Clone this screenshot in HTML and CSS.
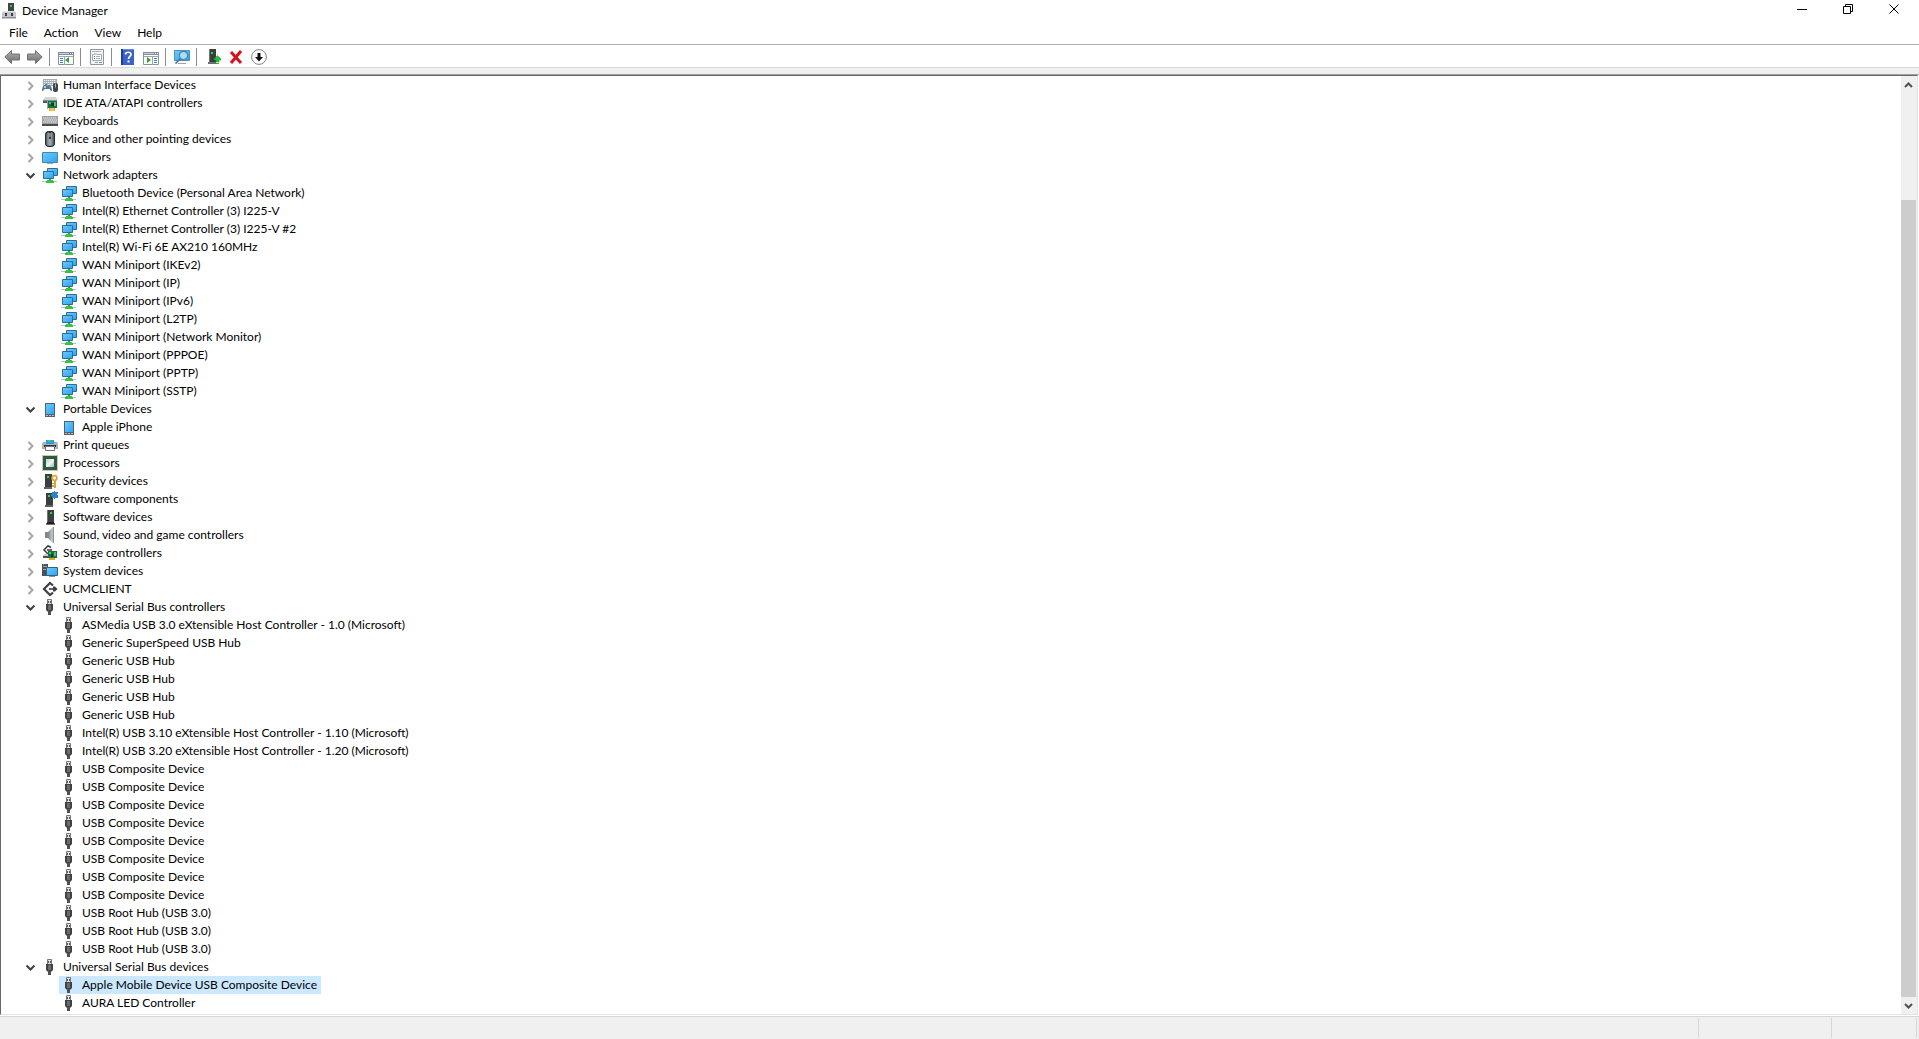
FILE: index.html
```html
<!DOCTYPE html>
<html lang="en">
<head>
  <meta charset="utf-8">
  <title>Device Manager</title>
  <link rel="stylesheet" href="styles.css">
</head>
<body>
  <svg class="sprite" aria-hidden="true">
    <defs>
      <linearGradient id="screen" x1="0" y1="0" x2="1" y2="1">
        <stop offset="0" stop-color="#6fcbff"/>
        <stop offset="1" stop-color="#2ba2f3"/>
      </linearGradient>
      <linearGradient id="metal" x1="0" y1="0" x2="0" y2="1">
        <stop offset="0" stop-color="#b4b4b4"/>
        <stop offset="1" stop-color="#6a6a6a"/>
      </linearGradient>
      <linearGradient id="mouse-body" x1="0" y1="0" x2="1" y2="0">
        <stop offset="0" stop-color="#5b636b"/>
        <stop offset="0.5" stop-color="#a9b1b8"/>
        <stop offset="1" stop-color="#4d545b"/>
      </linearGradient>
      <linearGradient id="chip" x1="0" y1="0" x2="1" y2="1">
        <stop offset="0" stop-color="#c9c9c9"/>
        <stop offset="0.5" stop-color="#f2f2f2"/>
        <stop offset="1" stop-color="#b5b5b5"/>
      </linearGradient>
      <linearGradient id="cone" x1="0" y1="0" x2="1" y2="0">
        <stop offset="0" stop-color="#7b8289"/>
        <stop offset="0.7" stop-color="#c5cacf"/>
        <stop offset="1" stop-color="#7b8289"/>
      </linearGradient>
    </defs>

    <symbol id="closed" viewBox="0 0 16 18">
      <path d="M5.500 6l4 4-4 4" fill="none" stroke="#a6a6a6" stroke-width="2"/>
    </symbol>
    <symbol id="open" viewBox="0 0 16 18">
      <path d="M3.500 7.500l4 4 4-4" fill="none" stroke="#404040" stroke-width="2"/>
    </symbol>

    <symbol id="app" viewBox="0 0 16 16">
      <path d="M6 0h6v10H6z" fill="#404347"/>
      <path d="M8 2h2v2H8z" fill="#23d52b"/>
      <path d="M1 8h12l1 2v5H0v-5z" fill="#c3c6cb"/>
      <path d="M0 14h14v1.500H0z" fill="#8b8f94"/>
      <path d="M1 8h12v1H1z" fill="#e5e7ea"/>
      <path d="M3 10h2v3H3zM9 10h2v3H9z" fill="#3b3e42"/>
    </symbol>

    <symbol id="hid" viewBox="0 0 16 16">
      <path d="M1 2h14v7H1z" fill="#a8acb0"/>
      <path d="M2 3.500h12M2 5.500h12M2 7.500h12" stroke="#f4f4f4" stroke-dasharray="1.300 .7"/>
      <path d="M0 14c0-3 1-6 3-6 1 0 1 1 2 1s1-1 2-1c2 0 3 3 3 6-2 0-2-2-3-2H3c-1 0-1 2-3 2z" fill="#66717c"/>
      <circle cx="3" cy="10" r="1" fill="#dfe6ec"/>
      <path d="M3 7h2v2H3zM7 9h2v2H7z" fill="#2196f3"/>
      <rect x="11" y="6" width="5" height="9" rx="2" fill="#3f464c"/>
      <path d="M13 6.500h1v4h-1z" fill="#aeb5bb"/>
    </symbol>

    <symbol id="ide" viewBox="0 0 16 16">
      <path d="M3 2h11l2 3H1z" fill="#d3d5d8"/>
      <path d="M1 5h14v3H1z" fill="#54585c"/>
      <path d="M1 5h14v1H1z" fill="#888d91"/>
      <path d="M5 6h1v8H5z" fill="#9a9ea2"/>
      <path d="M6 6h9v7H6z" fill="#187143"/>
      <path d="M7 7h2v2H7zM12 7h2v4h-2z" fill="#4fb977"/>
      <path d="M9 8h3v3H9z" fill="#0b4328"/>
      <path d="M7 13h6v3H7z" fill="#eda11f"/>
      <path d="M9 13v3M11 13v3" stroke="#fff" stroke-width=".6"/>
    </symbol>

    <symbol id="keyboard" viewBox="0 0 16 16">
      <path d="M0 3h16v10H0z" fill="#9da0a3"/>
      <path d="M0 11h16v2H0z" fill="#4a4d50"/>
      <path d="M1 5h14" stroke="#eee" stroke-dasharray="1.400 .6"/>
      <path d="M2 7h13" stroke="#eee" stroke-dasharray="1.400 .6"/>
      <path d="M1 9h14" stroke="#eee" stroke-dasharray="1.400 .6"/>
    </symbol>

    <symbol id="mouse" viewBox="0 0 16 16">
      <rect x="3.600" y=".6" width="8.800" height="14.800" rx="3.500" fill="url(#mouse-body)" stroke="#26292c" stroke-width="1.200"/>
      <path d="M7 1h2v7H7z" fill="#34383c"/>
      <path d="M7.500 2h1v4h-1z" fill="#c8ced3"/>
    </symbol>

    <symbol id="monitor" viewBox="0 0 16 16">
      <path d="M.5 3.500h15v10H.5z" fill="url(#screen)" stroke="#4b86a8"/>
      <path d="M5 14h6v1H5z" fill="#9aa5ad"/>
    </symbol>

    <symbol id="network" viewBox="0 0 16 16">
      <path d="M5.500 1.500h10v7h-10z" fill="url(#screen)" stroke="#2e6d92"/>
      <path d="M1.500 4.500h10v7h-10z" fill="url(#screen)" stroke="#2e6d92"/>
      <path d="M7 12h2v2H7z" fill="#39a34a"/>
      <path d="M0 14h15v1H0z" fill="#b9c4bd"/>
      <path d="M5 13h6v1h1v2H4v-2h1z" fill="#35c441"/>
    </symbol>

    <symbol id="phone" viewBox="0 0 16 16">
      <path d="M3 2h10v14H3z" fill="#55606a"/>
      <path d="M4 3h8v10H4z" fill="url(#screen)"/>
      <path d="M4 14h2v1H4zM7 14h2v1H7zM10 14h2v1h-2z" fill="#b8c0c6"/>
    </symbol>

    <symbol id="printer" viewBox="0 0 16 16">
      <path d="M4 3h8v4H4z" fill="#2f9ae8"/>
      <path d="M6 3h3v2H6z" fill="#48c75a"/>
      <path d="M1 5h3v2h8V5h3l1 2v5H0V7z" fill="#aeb1b4"/>
      <path d="M2 8h12v2H2z" fill="#35383b"/>
      <path d="M3.500 9.500h9v4h-9z" fill="#fff" stroke="#6d7174"/>
    </symbol>

    <symbol id="cpu" viewBox="0 0 16 16">
      <path d="M.5.5h15v15H.5z" fill="none" stroke="#b48c38" stroke-dasharray="1 1"/>
      <path d="M1 1h14v14H1z" fill="#275c46"/>
      <path d="M4 4h8v8H4z" fill="url(#chip)"/>
    </symbol>

    <symbol id="tower" viewBox="0 0 16 16">
      <path d="M5 1h7v12H5z" fill="#3c3f41"/>
      <path d="M5 1h1v12H5z" fill="#717577"/>
      <path d="M8 3h2v2H8z" fill="#21e32c"/>
      <path d="M4 14h9v2H4z" fill="#6e7275"/>
      <path d="M5 13h7v2H5z" fill="#202224"/>
    </symbol>

    <symbol id="security" viewBox="0 0 16 16">
      <path d="M3 1h7v13H3z" fill="#3c3f41"/>
      <path d="M5 3h2v2H5z" fill="#21e32c"/>
      <path d="M2 14h8v2H2z" fill="#5e6265"/>
      <circle cx="12.500" cy="5" r="2.300" fill="none" stroke="#dba43f" stroke-width="1.800"/>
      <path d="M12 7h2v8h-2zM10 10h2v1h-2zM10 12h2v2h-2z" fill="#dba43f"/>
    </symbol>

    <symbol id="component" viewBox="0 0 16 16">
      <path d="M4 2h7v12H4z" fill="#3c3f41"/>
      <path d="M6 4h2v2H6z" fill="#21e32c"/>
      <path d="M3 14h8v2H3z" fill="#5e6265"/>
      <path d="M10 1h2V0h1v1h3v2h-1v1h1v3h-3v1h-1V7h-2V5H9V3h1z" fill="#2b83cb"/>
    </symbol>

    <symbol id="speaker" viewBox="0 0 16 16">
      <path d="M3 5h3v6H3z" fill="#80878e"/>
      <path d="M6 5l5-5h1v16h-1l-5-5z" fill="url(#cone)"/>
    </symbol>

    <symbol id="storage" viewBox="0 0 16 16">
      <path d="M9 2.500L6 .8 2 5l4 4 2-2M5 5h5" fill="none" stroke="#3b3b3b" stroke-width="1.500"/>
      <path d="M1 10l2-1h3v4H1z" fill="#c9ccce"/>
      <path d="M1 11h5v2H1z" fill="#505356"/>
      <path d="M6 6h9v7H6z" fill="#187143"/>
      <path d="M7 7h2v2H7zM12 7h2v4h-2z" fill="#56bd7d"/>
      <path d="M9 9h2v3H9z" fill="#0b4328"/>
      <path d="M7 13h6v2H7z" fill="#eda11f"/>
    </symbol>

    <symbol id="system" viewBox="0 0 16 16">
      <path d="M0 1h6v12H0z" fill="#4b5157"/>
      <path d="M1 3h4v1H1zM1 6h4v1H1z" fill="#a4aab0"/>
      <path d="M1 1h1v1H1z" fill="#2fe33a"/>
      <path d="M4.500 4.500h11v8h-11z" fill="url(#screen)" stroke="#35647f"/>
      <path d="M7 13h6v1H7z" fill="#8b949b"/>
    </symbol>

    <symbol id="ucm" viewBox="0 0 16 16">
      <path d="M11 4.500L8 2 2 8l6 6 3-2.500" fill="none" stroke="#404040" stroke-width="2.200"/>
      <path d="M7 8h5" stroke="#404040" stroke-width="1.600"/>
      <path d="M11 5.500h2L15.500 8 13 10.500h-2z" fill="#404040"/>
    </symbol>

    <symbol id="usb" viewBox="0 0 16 16">
      <path d="M5.500.5h4v5h-4z" fill="#e4e4e4" stroke="#777"/>
      <path d="M6 2h1v2H6zM8 2h1v2H8z" fill="#555"/>
      <path d="M4 5h7v6l-2 2H6l-2-2z" fill="#424242"/>
      <path d="M6 6h3v5H6z" fill="#6c6c6c"/>
      <path d="M6 12h3v4H6z" fill="#505050"/>
    </symbol>

    <symbol id="back" viewBox="0 0 16 16">
      <path d="M.8 8l6.700-6.500V5h8v6h-8v3.500z" fill="url(#metal)" stroke="#707070"/>
    </symbol>
    <symbol id="forward" viewBox="0 0 16 16">
      <path d="M15.200 8L8.500 1.500V5h-8v6h8v3.500z" fill="url(#metal)" stroke="#707070"/>
    </symbol>
    <symbol id="tree-pane" viewBox="0 0 16 16">
      <path d="M.5 3.500h15v12H.5z" fill="#fff" stroke="#8a929b"/>
      <path d="M0 3h16v3H0z" fill="#828e9c"/>
      <path d="M1 4h10v1H1z" fill="#c9d0d8"/>
      <path d="M12 4h1v1h-1zM14 4h1v1h-1z" fill="#fff"/>
      <path d="M1 7.500h14M6.500 7v9" stroke="#9ba6b2"/>
      <path d="M2 9h3v1H2zM2 11h3v1H2zM2 13h3v1H2z" fill="#3f7fbf"/>
      <path d="M11 8v6l-4-3z" fill="#33a128"/>
    </symbol>
    <symbol id="properties" viewBox="0 0 16 16">
      <path d="M1.500.5h13v15h-13z" fill="#f2f4f6" stroke="#8f979e"/>
      <path d="M3 2h9v1H3z" fill="#adb5bd"/>
      <path d="M3.500 5.500h9v6h-9z" fill="#fff" stroke="#a0a9b1"/>
      <path d="M5 4h3v2H5z" fill="#c8ced4"/>
      <path d="M5 7h1v1H5zM5 9h1v1H5z" fill="#3f7fbf"/>
      <path d="M7 7h4v1H7zM7 9h4v1H7z" fill="#a7adb4"/>
      <path d="M6 13h3v1H6z" fill="#4db8e8"/>
      <path d="M10 13h3v1h-3z" fill="#8a949d"/>
    </symbol>
    <symbol id="help" viewBox="0 0 16 16">
      <path d="M1 0h13v16H1z" fill="#3b62c6"/>
      <path d="M1 0h2v16H1z" fill="#203e92"/>
      <path d="M3 0h11v1H3z" fill="#6f8ee0"/>
      <path d="M5.500 5.500c0-3 5.500-3 5.500 0 0 2-2.500 2-2.500 4.500" fill="none" stroke="#fff" stroke-width="1.700"/>
      <path d="M7.500 11.500h2v2h-2z" fill="#fff"/>
    </symbol>
    <symbol id="action-pane" viewBox="0 0 16 16">
      <path d="M.5 3.500h15v12H.5z" fill="#fff" stroke="#8a929b"/>
      <path d="M0 3h16v3H0z" fill="#828e9c"/>
      <path d="M1 4h10v1H1z" fill="#c9d0d8"/>
      <path d="M12 4h1v1h-1zM14 4h1v1h-1z" fill="#fff"/>
      <path d="M1 7.500h14M9.500 7v9" stroke="#9ba6b2"/>
      <path d="M11 9h3v1h-3zM11 11h3v1h-3zM11 13h3v1h-3z" fill="#3f7fbf"/>
      <path d="M4 8v6l4-3z" fill="#33a128"/>
    </symbol>
    <symbol id="scan" viewBox="0 0 16 16">
      <path d="M.5 1.500h15v10H.5z" fill="url(#screen)" stroke="#4a91bb"/>
      <path d="M4 14h8v1H4z" fill="#9aa5ad"/>
      <circle cx="9.500" cy="6.500" r="4.200" fill="#a5ddfb" stroke="#4f83a3" stroke-width="1.200"/>
      <path d="M6.500 9.500l-5 5" stroke="#47799a" stroke-width="1.700"/>
    </symbol>
    <symbol id="update" viewBox="0 0 16 16">
      <path d="M4 0h7v13H4z" fill="#3b3e40"/>
      <path d="M4 0h1v13H4z" fill="#74787b"/>
      <path d="M6 3h2v2H6z" fill="#21e32c"/>
      <path d="M3 13h8v2H3z" fill="#6b6f72"/>
      <path d="M12.500 6.500L16 10v1h-2v2h-3v-2H9v-1z" fill="#25c337" stroke="#168f25" stroke-width=".5"/>
      <path d="M11 14h3v1h-3z" fill="#25b936"/>
    </symbol>
    <symbol id="remove" viewBox="0 0 16 16">
      <path d="M3 3l10 11M13 2L3 14" stroke="#d9101c" stroke-width="3"/>
    </symbol>
    <symbol id="disable" viewBox="0 0 16 16">
      <circle cx="8" cy="8" r="7.400" fill="#fff" stroke="#858585"/>
      <path d="M6.500 4h3v4H12l-4 4.500L4 8h2.500z" fill="#111"/>
    </symbol>
  </svg>

  <div class="window">
    <header class="titlebar">
      <svg class="icon"><use href="#app"/></svg>
      <h1 class="title">Device Manager</h1>
      <div class="window-buttons">
        <button class="window-button" type="button" aria-label="Minimize">
          <svg class="glyph" viewBox="0 0 11 11"><path d="M0 5.500h10"/></svg>
        </button>
        <button class="window-button" type="button" aria-label="Restore">
          <svg class="glyph" viewBox="0 0 11 11"><path d="M.5 2.500h7v7h-7zM2.500 2.500v-2h7v7h-2"/></svg>
        </button>
        <button class="window-button" type="button" aria-label="Close">
          <svg class="glyph" viewBox="0 0 11 11"><path d="M.5.5l9 9M9.500.5l-9 9"/></svg>
        </button>
      </div>
    </header>

    <nav class="menubar">
      <button class="menu-item" type="button">File</button>
      <button class="menu-item" type="button">Action</button>
      <button class="menu-item" type="button">View</button>
      <button class="menu-item" type="button">Help</button>
    </nav>

    <div class="toolbar">
      <button class="tool" type="button" aria-label="Back"><svg class="icon"><use href="#back"/></svg></button>
      <button class="tool" type="button" aria-label="Forward"><svg class="icon"><use href="#forward"/></svg></button>
      <span class="separator"></span>
      <button class="tool" type="button" aria-label="Show console tree"><svg class="icon"><use href="#tree-pane"/></svg></button>
      <span class="separator"></span>
      <button class="tool" type="button" aria-label="Properties"><svg class="icon"><use href="#properties"/></svg></button>
      <span class="separator"></span>
      <button class="tool" type="button" aria-label="Help"><svg class="icon"><use href="#help"/></svg></button>
      <button class="tool" type="button" aria-label="Show action pane"><svg class="icon"><use href="#action-pane"/></svg></button>
      <span class="separator"></span>
      <button class="tool" type="button" aria-label="Scan for hardware changes"><svg class="icon"><use href="#scan"/></svg></button>
      <span class="separator"></span>
      <button class="tool" type="button" aria-label="Update driver"><svg class="icon"><use href="#update"/></svg></button>
      <button class="tool" type="button" aria-label="Uninstall device"><svg class="icon"><use href="#remove"/></svg></button>
      <button class="tool" type="button" aria-label="Disable device"><svg class="icon"><use href="#disable"/></svg></button>
    </div>

    <div class="divider"></div>

    <main class="panel">
      <ul class="tree">
        <li><div class="row"><button class="toggle" type="button" aria-label="Expand"><svg class="chevron"><use href="#closed"/></svg></button><svg class="icon"><use href="#hid"/></svg><span class="label">Human Interface Devices</span></div></li>
        <li><div class="row"><button class="toggle" type="button" aria-label="Expand"><svg class="chevron"><use href="#closed"/></svg></button><svg class="icon"><use href="#ide"/></svg><span class="label">IDE ATA/ATAPI controllers</span></div></li>
        <li><div class="row"><button class="toggle" type="button" aria-label="Expand"><svg class="chevron"><use href="#closed"/></svg></button><svg class="icon"><use href="#keyboard"/></svg><span class="label">Keyboards</span></div></li>
        <li><div class="row"><button class="toggle" type="button" aria-label="Expand"><svg class="chevron"><use href="#closed"/></svg></button><svg class="icon"><use href="#mouse"/></svg><span class="label">Mice and other pointing devices</span></div></li>
        <li><div class="row"><button class="toggle" type="button" aria-label="Expand"><svg class="chevron"><use href="#closed"/></svg></button><svg class="icon"><use href="#monitor"/></svg><span class="label">Monitors</span></div></li>
        <li>
          <div class="row"><button class="toggle" type="button" aria-label="Collapse"><svg class="chevron"><use href="#open"/></svg></button><svg class="icon"><use href="#network"/></svg><span class="label">Network adapters</span></div>
          <ul class="branch">
            <li class="row"><svg class="icon"><use href="#network"/></svg><span class="label">Bluetooth Device (Personal Area Network)</span></li>
            <li class="row"><svg class="icon"><use href="#network"/></svg><span class="label">Intel(R) Ethernet Controller (3) I225-V</span></li>
            <li class="row"><svg class="icon"><use href="#network"/></svg><span class="label">Intel(R) Ethernet Controller (3) I225-V #2</span></li>
            <li class="row"><svg class="icon"><use href="#network"/></svg><span class="label">Intel(R) Wi-Fi 6E AX210 160MHz</span></li>
            <li class="row"><svg class="icon"><use href="#network"/></svg><span class="label">WAN Miniport (IKEv2)</span></li>
            <li class="row"><svg class="icon"><use href="#network"/></svg><span class="label">WAN Miniport (IP)</span></li>
            <li class="row"><svg class="icon"><use href="#network"/></svg><span class="label">WAN Miniport (IPv6)</span></li>
            <li class="row"><svg class="icon"><use href="#network"/></svg><span class="label">WAN Miniport (L2TP)</span></li>
            <li class="row"><svg class="icon"><use href="#network"/></svg><span class="label">WAN Miniport (Network Monitor)</span></li>
            <li class="row"><svg class="icon"><use href="#network"/></svg><span class="label">WAN Miniport (PPPOE)</span></li>
            <li class="row"><svg class="icon"><use href="#network"/></svg><span class="label">WAN Miniport (PPTP)</span></li>
            <li class="row"><svg class="icon"><use href="#network"/></svg><span class="label">WAN Miniport (SSTP)</span></li>
          </ul>
        </li>
        <li>
          <div class="row"><button class="toggle" type="button" aria-label="Collapse"><svg class="chevron"><use href="#open"/></svg></button><svg class="icon"><use href="#phone"/></svg><span class="label">Portable Devices</span></div>
          <ul class="branch">
            <li class="row"><svg class="icon"><use href="#phone"/></svg><span class="label">Apple iPhone</span></li>
          </ul>
        </li>
        <li><div class="row"><button class="toggle" type="button" aria-label="Expand"><svg class="chevron"><use href="#closed"/></svg></button><svg class="icon"><use href="#printer"/></svg><span class="label">Print queues</span></div></li>
        <li><div class="row"><button class="toggle" type="button" aria-label="Expand"><svg class="chevron"><use href="#closed"/></svg></button><svg class="icon"><use href="#cpu"/></svg><span class="label">Processors</span></div></li>
        <li><div class="row"><button class="toggle" type="button" aria-label="Expand"><svg class="chevron"><use href="#closed"/></svg></button><svg class="icon"><use href="#security"/></svg><span class="label">Security devices</span></div></li>
        <li><div class="row"><button class="toggle" type="button" aria-label="Expand"><svg class="chevron"><use href="#closed"/></svg></button><svg class="icon"><use href="#component"/></svg><span class="label">Software components</span></div></li>
        <li><div class="row"><button class="toggle" type="button" aria-label="Expand"><svg class="chevron"><use href="#closed"/></svg></button><svg class="icon"><use href="#tower"/></svg><span class="label">Software devices</span></div></li>
        <li><div class="row"><button class="toggle" type="button" aria-label="Expand"><svg class="chevron"><use href="#closed"/></svg></button><svg class="icon"><use href="#speaker"/></svg><span class="label">Sound, video and game controllers</span></div></li>
        <li><div class="row"><button class="toggle" type="button" aria-label="Expand"><svg class="chevron"><use href="#closed"/></svg></button><svg class="icon"><use href="#storage"/></svg><span class="label">Storage controllers</span></div></li>
        <li><div class="row"><button class="toggle" type="button" aria-label="Expand"><svg class="chevron"><use href="#closed"/></svg></button><svg class="icon"><use href="#system"/></svg><span class="label">System devices</span></div></li>
        <li><div class="row"><button class="toggle" type="button" aria-label="Expand"><svg class="chevron"><use href="#closed"/></svg></button><svg class="icon"><use href="#ucm"/></svg><span class="label">UCMCLIENT</span></div></li>
        <li>
          <div class="row"><button class="toggle" type="button" aria-label="Collapse"><svg class="chevron"><use href="#open"/></svg></button><svg class="icon"><use href="#usb"/></svg><span class="label">Universal Serial Bus controllers</span></div>
          <ul class="branch">
            <li class="row"><svg class="icon"><use href="#usb"/></svg><span class="label">ASMedia USB 3.0 eXtensible Host Controller - 1.0 (Microsoft)</span></li>
            <li class="row"><svg class="icon"><use href="#usb"/></svg><span class="label">Generic SuperSpeed USB Hub</span></li>
            <li class="row"><svg class="icon"><use href="#usb"/></svg><span class="label">Generic USB Hub</span></li>
            <li class="row"><svg class="icon"><use href="#usb"/></svg><span class="label">Generic USB Hub</span></li>
            <li class="row"><svg class="icon"><use href="#usb"/></svg><span class="label">Generic USB Hub</span></li>
            <li class="row"><svg class="icon"><use href="#usb"/></svg><span class="label">Generic USB Hub</span></li>
            <li class="row"><svg class="icon"><use href="#usb"/></svg><span class="label">Intel(R) USB 3.10 eXtensible Host Controller - 1.10 (Microsoft)</span></li>
            <li class="row"><svg class="icon"><use href="#usb"/></svg><span class="label">Intel(R) USB 3.20 eXtensible Host Controller - 1.20 (Microsoft)</span></li>
            <li class="row"><svg class="icon"><use href="#usb"/></svg><span class="label">USB Composite Device</span></li>
            <li class="row"><svg class="icon"><use href="#usb"/></svg><span class="label">USB Composite Device</span></li>
            <li class="row"><svg class="icon"><use href="#usb"/></svg><span class="label">USB Composite Device</span></li>
            <li class="row"><svg class="icon"><use href="#usb"/></svg><span class="label">USB Composite Device</span></li>
            <li class="row"><svg class="icon"><use href="#usb"/></svg><span class="label">USB Composite Device</span></li>
            <li class="row"><svg class="icon"><use href="#usb"/></svg><span class="label">USB Composite Device</span></li>
            <li class="row"><svg class="icon"><use href="#usb"/></svg><span class="label">USB Composite Device</span></li>
            <li class="row"><svg class="icon"><use href="#usb"/></svg><span class="label">USB Composite Device</span></li>
            <li class="row"><svg class="icon"><use href="#usb"/></svg><span class="label">USB Root Hub (USB 3.0)</span></li>
            <li class="row"><svg class="icon"><use href="#usb"/></svg><span class="label">USB Root Hub (USB 3.0)</span></li>
            <li class="row"><svg class="icon"><use href="#usb"/></svg><span class="label">USB Root Hub (USB 3.0)</span></li>
          </ul>
        </li>
        <li>
          <div class="row"><button class="toggle" type="button" aria-label="Collapse"><svg class="chevron"><use href="#open"/></svg></button><svg class="icon"><use href="#usb"/></svg><span class="label">Universal Serial Bus devices</span></div>
          <ul class="branch">
            <li class="row selected"><svg class="icon"><use href="#usb"/></svg><span class="label">Apple Mobile Device USB Composite Device</span></li>
            <li class="row"><svg class="icon"><use href="#usb"/></svg><span class="label">AURA LED Controller</span></li>
          </ul>
        </li>
      </ul>

      <div class="scrollbar">
        <button class="scroll-button" type="button" aria-label="Scroll up">
          <svg class="arrow" viewBox="0 0 9 9"><path d="M1 7l3.500-3.500L8 7"/></svg>
        </button>
        <div class="track">
          <div class="thumb"></div>
        </div>
        <button class="scroll-button" type="button" aria-label="Scroll down">
          <svg class="arrow" viewBox="0 0 9 9"><path d="M1 3l3.500 3.500L8 3"/></svg>
        </button>
      </div>
    </main>

    <footer class="statusbar">
      <div class="status-main"></div>
      <div class="status-middle"></div>
      <div class="status-end"></div>
    </footer>
  </div>
</body>
</html>
```
FILE: styles.css
```css
* {
  box-sizing: border-box;
}

body {
  margin: 0;
  font-family: Lato, "Open Sans", sans-serif;
  font-size: 12px;
  line-height: 18px;
  color: #000;
  background-color: #fff;
}

button {
  margin: 0;
  padding: 0;
  border: none;
  background: none;
  font: inherit;
  color: inherit;
}

ul {
  margin: 0;
  padding: 0;
  list-style: none;
}

.sprite {
  position: absolute;
  width: 0;
  height: 0;
}

.icon {
  display: block;
  flex: none;
  width: 16px;
  height: 16px;
}

.window {
  display: flex;
  flex-direction: column;
  height: 100vh;
  overflow: hidden;
}

/* Title bar */
.titlebar {
  display: flex;
  align-items: center;
  height: 22px;
  padding: 0 2px;
}

.title {
  flex: 1;
  margin: 0 0 0 4px;
  font-size: 12px;
  font-weight: normal;
}

.window-buttons {
  display: flex;
  align-self: flex-start;
}

.window-button {
  display: flex;
  justify-content: center;
  width: 46px;
  height: 22px;
  padding-top: 4px;
}

.glyph {
  width: 11px;
  height: 11px;
  fill: none;
  stroke: #000;
}

/* Menu */
.menubar {
  display: flex;
  gap: 16px;
  height: 23px;
  padding: 1px 0 0 9px;
  border-bottom: 1px solid #b0b0b0;
}

.menu-item {
  height: 20px;
}

/* Toolbar */
.toolbar {
  display: flex;
  align-items: center;
  height: 23px;
  padding: 1px 0 0 1px;
  border-bottom: 1px solid #d9d9d9;
}

.tool {
  width: 23px;
  padding: 0 4px 0 3px;
}

.separator {
  width: 8px;
  height: 18px;
  padding-left: 2px;
}

.separator::before {
  content: "";
  display: block;
  width: 1px;
  height: 100%;
  background-color: #8d8d8d;
}

.divider {
  height: 7px;
  border-bottom: 1px solid #a0a0a0;
  background-color: #f0f0f0;
}

/* Device tree */
.panel {
  display: flex;
  flex: 1;
  min-height: 0;
  margin-right: 1px;
  border: 1px solid #e3e3e3;
  border-top-color: #696969;
  border-left-color: #696969;
}

.tree {
  flex: 1;
  min-width: 0;
  padding-left: 22px;
  overflow: hidden;
}

.row {
  display: flex;
  align-items: center;
  width: max-content;
  height: 18px;
}

.toggle {
  width: 16px;
  height: 18px;
  margin-right: 3px;
}

.chevron {
  display: block;
  width: 16px;
  height: 18px;
}

.label {
  padding: 0 4px 0 5px;
  white-space: nowrap;
}

.branch {
  padding-left: 36px;
}

.branch .row {
  padding-left: 2px;
}

.selected {
  background-color: #cce8ff;
}

/* Scroll bar */
.scrollbar {
  display: flex;
  flex-direction: column;
  width: 16px;
  background-color: #f0f0f0;
}

.scroll-button {
  display: flex;
  align-items: center;
  justify-content: center;
  width: 15px;
  height: 17px;
}

.arrow {
  width: 9px;
  height: 9px;
  fill: none;
  stroke: #505050;
  stroke-width: 2;
}

.track {
  display: flex;
  flex: 1;
  flex-direction: column;
}

.track::before {
  content: "";
  flex: 107;
}

.thumb {
  flex: 797;
  width: 15px;
  background-color: #cdcdcd;
}

/* Status bar */
.statusbar {
  display: flex;
  height: 23px;
  margin-top: 1px;
  padding: 1px 2px 1px 0;
  border-top: 1px solid #d7d7d7;
  background-color: #f0f0f0;
}

.status-main,
.status-middle,
.status-end {
  border-right: 1px solid #d7d7d7;
}

.status-main {
  flex: 1;
}

.status-middle {
  width: 133px;
}

.status-end {
  width: 85px;
}
```
